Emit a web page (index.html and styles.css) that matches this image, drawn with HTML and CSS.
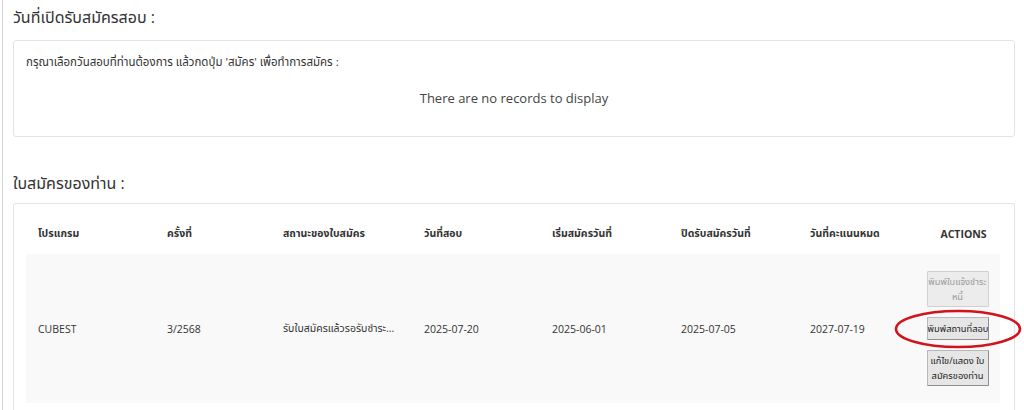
FILE: index.html
```html
<!DOCTYPE html>
<html lang="th">
<head>
<meta charset="utf-8">
<link rel="stylesheet" href="styles.css">
</head>
<body>
<div class="page">
  <h2 class="heading">วันที่เปิดรับสมัครสอบ :</h2>
  <div class="card card-open">
    <p class="hint">กรุณาเลือกวันสอบที่ท่านต้องการ แล้วกดปุ่ม 'สมัคร' เพื่อทำการสมัคร :</p>
    <p class="empty">There are no records to display</p>
  </div>

  <h2 class="heading heading-2">ใบสมัครของท่าน :</h2>
  <div class="card card-apps">
    <table class="apps">
      <colgroup>
        <col class="c1"><col class="c2"><col class="c3"><col class="c4"><col class="c5"><col class="c6"><col class="c7"><col class="c8">
      </colgroup>
      <thead>
        <tr>
          <th>โปรแกรม</th>
          <th>ครั้งที่</th>
          <th>สถานะของใบสมัคร</th>
          <th>วันที่สอบ</th>
          <th>เริ่มสมัครวันที่</th>
          <th>ปิดรับสมัครวันที่</th>
          <th>วันที่คะแนนหมด</th>
          <th class="act-head">ACTIONS</th>
        </tr>
      </thead>
      <tbody>
        <tr>
          <td>CUBEST</td>
          <td>3/2568</td>
          <td>รับใบสมัครแล้วรอรับชำระ...</td>
          <td>2025-07-20</td>
          <td>2025-06-01</td>
          <td>2025-07-05</td>
          <td>2027-07-19</td>
          <td class="actions">
            <div class="btns">
              <button class="btn" disabled>พิมพ์ใบแจ้งชำระ<br>หนี้</button>
              <span class="circled">
                <button class="btn">พิมพ์สถานที่สอบ</button>
                <svg class="ring" viewBox="0 0 130 40" aria-hidden="true"><ellipse cx="65" cy="20" rx="62" ry="18" fill="none" stroke="#d0141c" stroke-width="2.6"/></svg>
              </span>
              <button class="btn">แก้ไข/แสดง ใบ<br>สมัครของท่าน</button>
            </div>
          </td>
        </tr>
      </tbody>
    </table>
  </div>
</div>
</body>
</html>
```

FILE: styles.css
```css
* { box-sizing: border-box; }
html, body { margin: 0; padding: 0; background: #fff; }
body {
  font-family: "Open Sans", "Noto Sans", "Noto Sans Thai", "Liberation Sans", sans-serif;
  color: #333;
  overflow: hidden;
  height: 410px;
}
.page {
  margin-left: 2px;
  border-left: 1px solid #d6d6d6;
  padding: 0 9px 0 10px;
  height: 410px;
}
.heading {
  font-size: 16px;
  font-weight: 400;
  margin: 0;
  padding-top: 5px;
  height: 40px;
  line-height: 24px;
  color: #333;
}
.card {
  border: 1px solid #e4e4e4;
  border-radius: 3px;
  background: #fff;
}
.card-open {
  height: 97px;
  padding: 12px 12px 0 12px;
}
.hint {
  margin: 0;
  font-size: 11.5px;
  line-height: 18px;
  color: #333;
}
.empty {
  margin: 18px 0 0;
  text-align: center;
  font-size: 13px;
  line-height: 18px;
  color: #444;
}
.heading-2 {
  padding-top: 34px;
  height: 66px;
}
.card-apps {
  padding: 10px 12px 0 12px;
  height: 220px;
  border-bottom: none;
}
.apps {
  border-collapse: collapse;
  table-layout: fixed;
  width: 974px;
  font-size: 10.5px;
}
.c1 { width: 129px; }
.c2 { width: 116px; }
.c3 { width: 141px; }
.c4 { width: 128px; }
.c5 { width: 129px; }
.c6 { width: 129px; }
.c7 { width: 117px; }
.c8 { width: 85px; }
.apps th {
  text-align: left;
  font-weight: 700;
  padding: 0 0 0 12px;
  height: 40px;
  color: #333;
  white-space: nowrap;
}
.apps th.act-head { text-align: center; }
.apps tbody tr { background: #f9f9f9; }
.apps td {
  padding: 0 0 0 12px;
  height: 149px;
  color: #333;
  white-space: nowrap;
  overflow: hidden;
}
.apps td.actions { padding: 0; overflow: visible; }
.btns {
  display: flex;
  flex-direction: column;
  align-items: center;
  gap: 10px;
}
.btn {
  font-family: inherit;
  font-size: 9.3px;
  line-height: 15px;
  width: 62px;
  padding: 2px 0;
  background: #e6e6e6;
  border: 1px solid #b8b8b8;
  border-right-color: #8f8f8f;
  border-bottom-color: #8f8f8f;
  border-radius: 1px;
  color: #222;
  white-space: nowrap;
  text-align: center;
  overflow: visible;
}
.btn[disabled] {
  color: #9a9a9a;
  background: #ececec;
  border-color: #d0d0d0;
}
.circled {
  position: relative;
  display: block;
}
.circled .btn { padding: 3px 0; }
.ring {
  position: absolute;
  left: -34px;
  top: -8px;
  width: 130px;
  height: 40px;
  pointer-events: none;
  overflow: visible;
}
```
